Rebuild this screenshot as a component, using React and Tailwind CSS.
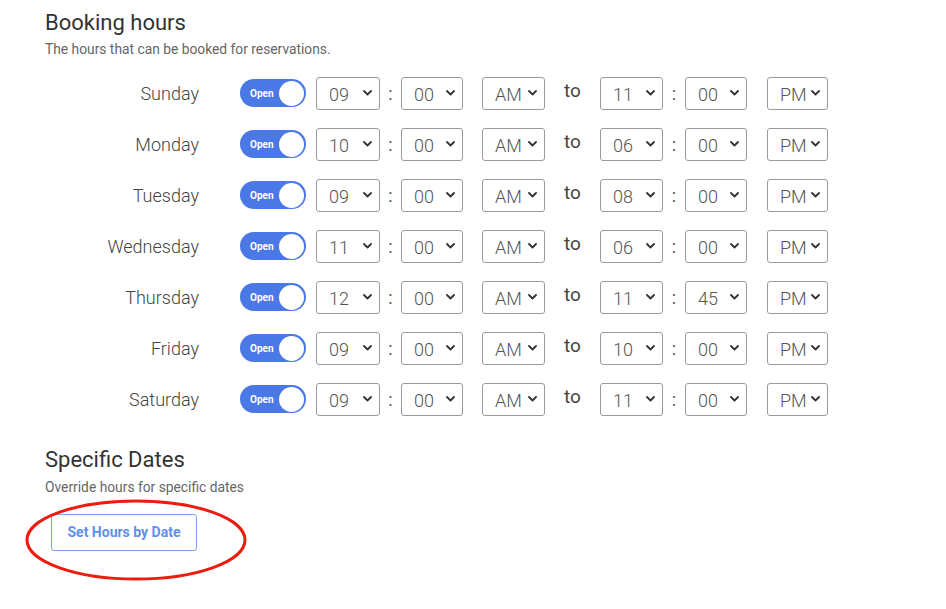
import React from "react"

const rows = [
    { day: "Sunday", from: ["09", "00", "AM"], to: ["11", "00", "PM"] },
    { day: "Monday", from: ["10", "00", "AM"], to: ["06", "00", "PM"] },
    { day: "Tuesday", from: ["09", "00", "AM"], to: ["08", "00", "PM"] },
    { day: "Wednesday", from: ["11", "00", "AM"], to: ["06", "00", "PM"] },
    { day: "Thursday", from: ["12", "00", "AM"], to: ["11", "45", "PM"] },
    { day: "Friday", from: ["09", "00", "AM"], to: ["10", "00", "PM"] },
    { day: "Saturday", from: ["09", "00", "AM"], to: ["11", "00", "PM"] },
]

function Chevron() {
    return (
        <svg width="9" height="6" viewBox="0 0 9 6" className="shrink-0">
            <path d="M1 1 L4.5 4.5 L8 1" fill="none" stroke="#333" strokeWidth="1.8" strokeLinecap="round" strokeLinejoin="round" />
        </svg>
    )
}

function Select({ value, width }) {
    return (
        <div className={`${width} h-[33px] flex items-center justify-between pl-[12px] pr-[7px] border border-[#9a9a9a] rounded-[3px] bg-white`}>
            <span className="text-[18px] font-light text-[#555] pt-[3px]">{value}</span>
            <Chevron />
        </div>
    )
}

function Toggle() {
    return (
        <div className="w-[66px] h-[28px] rounded-full bg-[#4a78e6] flex items-center justify-between pl-[10px] pr-[2px]">
            <span className="text-[10px] font-bold text-white">Open</span>
            <div className="w-[25px] h-[25px] rounded-full bg-white" />
        </div>
    )
}

export default function App() {
    return (
        <div className="w-[946px] h-[609px] bg-white relative overflow-hidden pl-[45px] pt-[9px]" style={{ fontFamily: "Roboto, 'Liberation Sans', sans-serif" }}>
            <h2 className="text-[22px] leading-[28px] text-[#333]">Booking hours</h2>
            <p className="text-[13.8px] leading-[18px] text-[#666] mt-[3px]">The hours that can be booked for reservations.</p>

            <div className="flex flex-col gap-[17px] mt-[18px]">
                {rows.map((r) => (
                    <div key={r.day} className="flex items-center h-[34px]">
                        <div className="w-[154px] text-right text-[18px] font-light text-[#444]">{r.day}</div>
                        <div className="ml-[41px]"><Toggle /></div>
                        <div className="ml-[10px]"><Select value={r.from[0]} width="w-[64px]" /></div>
                        <div className="w-[21px] text-center text-[18px] text-[#555]">:</div>
                        <Select value={r.from[1]} width="w-[62px]" />
                        <div className="ml-[19px]"><Select value={r.from[2]} width="w-[63px]" /></div>
                        <div className="w-[55px] text-center text-[19px] text-[#444] pb-[4px]">to</div>
                        <Select value={r.to[0]} width="w-[63px]" />
                        <div className="w-[22px] text-center text-[18px] text-[#555]">:</div>
                        <Select value={r.to[1]} width="w-[62px]" />
                        <div className="ml-[20px]"><Select value={r.to[2]} width="w-[61px]" /></div>
                    </div>
                ))}
            </div>

            <h2 className="text-[22px] leading-[28px] text-[#333] mt-[30px]">Specific Dates</h2>
            <p className="text-[13.8px] leading-[18px] text-[#666] mt-[4px]">Override hours for specific dates</p>
            <button className="ml-[6px] mt-[18px] w-[146px] h-[37px] border border-[#7ba2ee] rounded-[3px] text-[14px] font-bold text-[#5f8fee] bg-white">
                Set Hours by Date
            </button>

            <svg className="absolute left-[24px] top-[498px]" width="224" height="84" viewBox="0 0 224 84">
                <ellipse cx="112" cy="42" rx="109" ry="39" fill="none" stroke="#ee1b0f" strokeWidth="3" />
            </svg>
        </div>
    )
}
